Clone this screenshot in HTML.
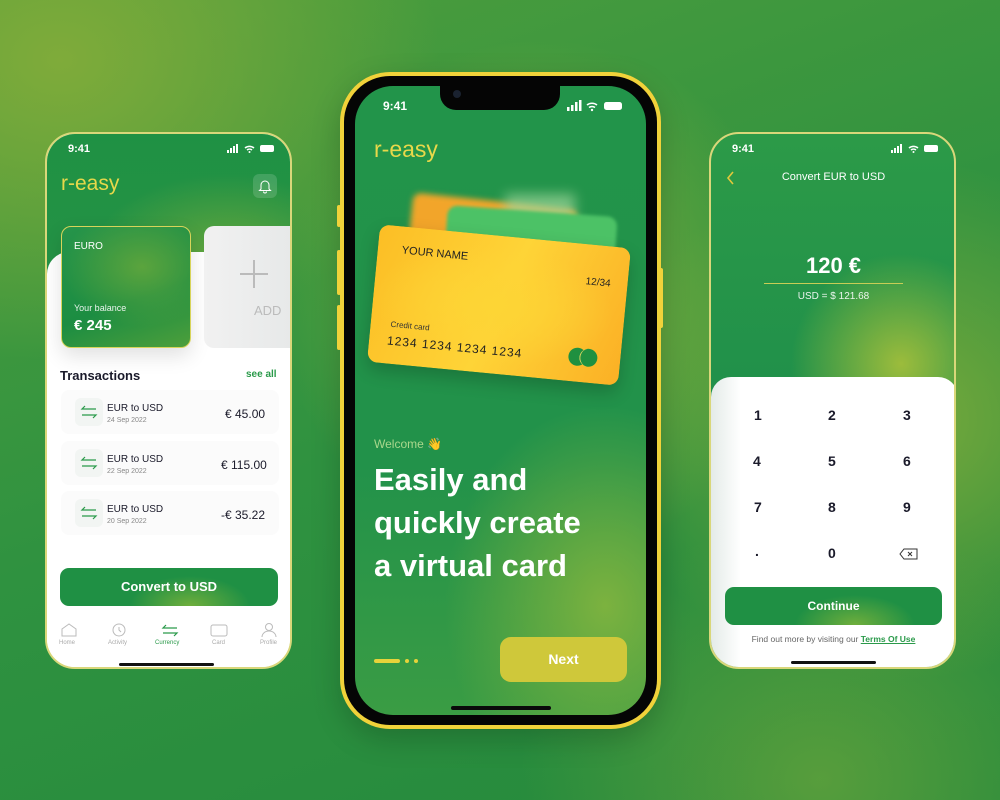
<!DOCTYPE html>
<html><head><meta charset="utf-8"><style>
*{margin:0;padding:0;box-sizing:border-box}
body{width:1000px;height:800px;overflow:hidden;font-family:"Liberation Sans",sans-serif;position:relative;
background:
radial-gradient(ellipse 260px 260px at 540px 300px,rgba(140,178,60,.85),rgba(140,178,60,0)),
radial-gradient(ellipse 300px 260px at 900px 420px,rgba(140,176,58,.8),rgba(140,176,58,0)),
radial-gradient(ellipse 380px 300px at 60px 60px,rgba(130,172,58,.95),rgba(130,172,58,0)),
radial-gradient(ellipse 300px 260px at 820px 780px,rgba(120,170,60,.6),rgba(120,170,60,0)),
linear-gradient(160deg,#4f9e3c 0%,#2f9240 50%,#24893c 100%);}
.abs{position:absolute}
.ph{position:absolute;border-radius:30px;overflow:hidden;border:2px solid #d9d77a}
.st{position:absolute;font-size:11px;font-weight:bold;color:#fff}
.w{color:#fff}
</style></head><body>

<!-- LEFT PHONE -->
<div class="ph" style="left:45px;top:132px;width:247px;height:537px;background:#fff">
  <div class="abs" style="left:0;top:0;width:247px;height:260px;background:radial-gradient(ellipse 140px 90px at 180px 130px,#6aa83c,rgba(0,0,0,0)),linear-gradient(180deg,#1f9144,#2a9446)"></div>
  <div class="abs" style="left:0;top:118px;width:247px;height:420px;background:#fff;border-radius:22px 0 0 0"></div>
  <div class="st" style="left:21px;top:9px">9:41</div>
  <svg class="abs" style="left:180px;top:10px" width="50" height="10"><rect x="0" y="6" width="2" height="3" fill="#fff"/><rect x="3" y="4" width="2" height="5" fill="#fff"/><rect x="6" y="2" width="2" height="7" fill="#fff"/><rect x="9" y="0" width="2" height="9" fill="#fff"/><path d="M18 4a7 7 0 0 1 9 0M20 6a4 4 0 0 1 5 0" stroke="#fff" stroke-width="1.5" fill="none"/><circle cx="22.5" cy="8" r="1" fill="#fff"/><rect x="33" y="1" width="14" height="7" rx="2" fill="#fff"/></svg>
  <div class="abs" style="left:14px;top:38px;font-size:21px;color:#e6d84a">r-easy</div>
  <div class="abs" style="left:206px;top:40px;width:24px;height:24px;border-radius:6px;background:rgba(255,255,255,.15)"></div>
  <svg class="abs" style="left:211px;top:44px" width="14" height="16"><path d="M3 11V7a4 4 0 0 1 8 0v4l1.5 1.5h-11z M5.5 13.5a1.5 1.5 0 0 0 3 0" stroke="#fff" stroke-width="1" fill="none"/></svg>
  <div class="abs" style="left:14px;top:92px;width:130px;height:122px;border-radius:10px;border:1.5px solid #d8d45a;background:radial-gradient(ellipse 80px 60px at 80px 40px,#5ba43d,rgba(0,0,0,0)),linear-gradient(160deg,#26944a,#1c8d42 60%,#4d9f3b);box-shadow:0 8px 20px rgba(0,0,0,.12)">
    <div class="abs w" style="left:12px;top:14px;font-size:10px">EURO</div>
    <div class="abs w" style="left:12px;top:76px;font-size:9px;opacity:.9">Your balance</div>
    <div class="abs w" style="left:12px;top:90px;font-size:15px;font-weight:bold">€ 245</div>
  </div>
  <div class="abs" style="left:157px;top:92px;width:95px;height:122px;border-radius:10px;background:linear-gradient(90deg,#f1f1f1,#e6e8e8)">
    <div class="abs" style="left:49px;top:34px;width:2px;height:28px;background:#bbb"></div>
    <div class="abs" style="left:36px;top:47px;width:28px;height:2px;background:#bbb"></div>
    <div class="abs" style="left:50px;top:77px;font-size:13px;color:#bbb">ADD</div>
  </div>
  <div class="abs" style="left:13px;top:234px;font-size:13px;font-weight:bold;color:#1a1a2a">Transactions</div>
  <div class="abs" style="left:199px;top:235px;font-size:10px;font-weight:bold;color:#2a9a4a">see all</div>
  <div class="abs" style="left:14px;top:256px;width:218px;height:44px;border-radius:8px;background:#fbfbfb"></div>
  <div class="abs" style="left:14px;top:307px;width:218px;height:44px;border-radius:8px;background:#fbfbfb"></div>
  <div class="abs" style="left:14px;top:357px;width:218px;height:44px;border-radius:8px;background:#fbfbfb"></div>
  <div class="abs" style="left:28px;top:264px;width:28px;height:28px;border-radius:6px;background:#f2f5f3"></div>
  <div class="abs" style="left:28px;top:315px;width:28px;height:28px;border-radius:6px;background:#f2f5f3"></div>
  <div class="abs" style="left:28px;top:365px;width:28px;height:28px;border-radius:6px;background:#f2f5f3"></div>
  <svg class="abs" style="left:33px;top:271px" width="18" height="14"><path d="M16 4H2l3-3M2 10h14l-3 3" stroke="#2a9a4a" stroke-width="1.2" fill="none"/></svg>
  <svg class="abs" style="left:33px;top:322px" width="18" height="14"><path d="M16 4H2l3-3M2 10h14l-3 3" stroke="#2a9a4a" stroke-width="1.2" fill="none"/></svg>
  <svg class="abs" style="left:33px;top:372px" width="18" height="14"><path d="M16 4H2l3-3M2 10h14l-3 3" stroke="#2a9a4a" stroke-width="1.2" fill="none"/></svg>
  <div class="abs" style="left:60px;top:269px;font-size:10px;color:#1a1a2a">EUR to USD</div>
  <div class="abs" style="left:60px;top:283px;font-size:7px;color:#888">24 Sep 2022</div>
  <div class="abs" style="left:178px;top:273px;font-size:12px;color:#1a1a2a">€ 45.00</div>
  <div class="abs" style="left:60px;top:320px;font-size:10px;color:#1a1a2a">EUR to USD</div>
  <div class="abs" style="left:60px;top:334px;font-size:7px;color:#888">22 Sep 2022</div>
  <div class="abs" style="left:174px;top:324px;font-size:12px;color:#1a1a2a">€ 115.00</div>
  <div class="abs" style="left:60px;top:370px;font-size:10px;color:#1a1a2a">EUR to USD</div>
  <div class="abs" style="left:60px;top:384px;font-size:7px;color:#888">20 Sep 2022</div>
  <div class="abs" style="left:174px;top:374px;font-size:12px;color:#1a1a2a">-€ 35.22</div>
  <div class="abs" style="left:13px;top:434px;width:218px;height:38px;border-radius:9px;background:radial-gradient(ellipse 60px 30px at 130px 38px,#6fae3c,rgba(0,0,0,0)),#1f9044;color:#fff;font-size:13px;font-weight:bold;text-align:center;line-height:38px">Convert to USD</div>
  <div class="abs" style="left:0;top:486px;width:247px;font-size:6px;color:#aaa">
    <span class="abs" style="left:12px;top:20px">Home</span>
    <span class="abs" style="left:61px;top:20px">Activity</span>
    <span class="abs" style="left:108px;top:20px;color:#2a9a4a">Currency</span>
    <span class="abs" style="left:165px;top:20px">Card</span>
    <span class="abs" style="left:213px;top:20px">Profile</span>
  </div>
  <svg class="abs" style="left:0;top:486px" width="247" height="20"><path d="M15 16V9l7-5 7 5v7z" stroke="#bbb" fill="none"/><circle cx="72" cy="10" r="6" stroke="#bbb" fill="none"/><path d="M72 7v3l2 2" stroke="#bbb" fill="none"/><path d="M130 8h-14l3-3M116 13h14l-3 3" stroke="#2a9a4a" stroke-width="1.2" fill="none"/><rect x="164" y="5" width="16" height="11" rx="2" stroke="#bbb" fill="none"/><circle cx="222" cy="7" r="3.5" stroke="#bbb" fill="none"/><path d="M215 17a7 6 0 0 1 14 0" stroke="#bbb" fill="none"/></svg>
  <div class="abs" style="left:72px;top:529px;width:95px;height:3px;border-radius:2px;background:#111"></div>
</div>

<!-- MIDDLE PHONE -->
<div class="abs" style="left:340px;top:72px;width:321px;height:657px;border-radius:50px;background:#f1d23a;box-shadow:0 10px 30px rgba(0,0,0,.2)"></div>
<div class="abs" style="left:337px;top:205px;width:4px;height:22px;background:#f1d23a;border-radius:2px"></div>
<div class="abs" style="left:337px;top:250px;width:4px;height:45px;background:#f1d23a;border-radius:2px"></div>
<div class="abs" style="left:337px;top:305px;width:4px;height:45px;background:#f1d23a;border-radius:2px"></div>
<div class="abs" style="left:659px;top:268px;width:4px;height:60px;background:#f1d23a;border-radius:2px"></div>
<div class="abs" style="left:344px;top:76px;width:313px;height:649px;border-radius:46px;background:#050505"></div>
<div class="abs" style="left:355px;top:86px;width:291px;height:629px;border-radius:38px;overflow:hidden;background:radial-gradient(ellipse 160px 200px at 250px 520px,#7cb23f,rgba(0,0,0,0)),linear-gradient(180deg,#22944a 0%,#22924a 60%,#3a9c44 100%)">
  <div class="st" style="left:28px;top:13px;font-size:12px">9:41</div>
  <svg class="abs" style="left:212px;top:14px" width="60" height="12"><rect x="0" y="7" width="2.5" height="4" fill="#fff"/><rect x="4" y="5" width="2.5" height="6" fill="#fff"/><rect x="8" y="2" width="2.5" height="9" fill="#fff"/><rect x="12" y="0" width="2.5" height="11" fill="#fff"/><path d="M20 5a8 8 0 0 1 10 0M22 7.5a5 5 0 0 1 6 0" stroke="#fff" stroke-width="1.6" fill="none"/><circle cx="25" cy="10" r="1.2" fill="#fff"/><rect x="37" y="2" width="18" height="8" rx="2.5" fill="#fff"/></svg>
  <div class="abs" style="left:85px;top:0;width:120px;height:24px;background:#050505;border-radius:0 0 16px 16px"></div>
  <div class="abs" style="left:98px;top:4px;width:8px;height:8px;border-radius:50%;background:#1a2230"></div>
  <div class="abs" style="left:19px;top:50px;font-size:23px;color:#e8d84a">r-easy</div>
  <div class="abs" style="left:55px;top:115px;width:165px;height:60px;background:#f2a52a;border-radius:8px;transform:rotate(6deg);filter:blur(3px)"></div>
  <div class="abs" style="left:150px;top:108px;width:70px;height:30px;background:#9fd69a;filter:blur(6px);opacity:.7"></div>
  <div class="abs" style="left:90px;top:125px;width:170px;height:80px;background:#4cc266;border-radius:10px;transform:rotate(4deg);filter:blur(1.5px)"></div>
  <div class="abs" style="left:18px;top:150px;width:252px;height:138px;border-radius:10px;transform:rotate(5.5deg);background:radial-gradient(ellipse 120px 60px at 120px 70px,#fdd535,rgba(0,0,0,0)),linear-gradient(110deg,#fcbe25,#fed437 50%,#fbb025);box-shadow:0 8px 18px rgba(0,0,0,.2)">
    <div class="abs" style="left:24px;top:18px;font-size:11px;color:#222">YOUR NAME</div>
    <div class="abs" style="left:210px;top:32px;font-size:10px;color:#222">12/34</div>
    <div class="abs" style="left:20px;top:94px;font-size:8px;color:#333">Credit card</div>
    <div class="abs" style="left:18px;top:108px;font-size:12px;color:#222;letter-spacing:1px">1234 1234 1234 1234</div>
    <div class="abs" style="left:200px;top:104px;width:18px;height:18px;border-radius:50%;background:#1f9040"></div>
    <div class="abs" style="left:211px;top:104px;width:18px;height:18px;border-radius:50%;background:#1f9040;border-left:1px solid #e2d860"></div>
  </div>
  <div class="abs" style="left:19px;top:351px;font-size:12px;color:#a9d78c">Welcome <span style="color:#e2c93a">👋</span></div>
  <div class="abs" style="left:19px;top:372px;font-size:31px;font-weight:bold;color:#fff;line-height:43px">Easily and<br>quickly create<br>a virtual card</div>
  <div class="abs" style="left:19px;top:573px;width:26px;height:4px;border-radius:2px;background:#e6d33a"></div>
  <div class="abs" style="left:50px;top:573px;width:4px;height:4px;border-radius:2px;background:#e6d33a"></div>
  <div class="abs" style="left:59px;top:573px;width:4px;height:4px;border-radius:2px;background:#e6d33a"></div>
  <div class="abs" style="left:145px;top:551px;width:127px;height:45px;border-radius:11px;background:#cfc83a;color:#fff;font-size:14px;font-weight:bold;text-align:center;line-height:45px">Next</div>
  <div class="abs" style="left:96px;top:620px;width:100px;height:4px;border-radius:2px;background:#0a0a0a"></div>
</div>

<!-- RIGHT PHONE -->
<div class="ph" style="left:709px;top:132px;width:247px;height:537px;background:radial-gradient(ellipse 110px 110px at 190px 230px,#9cbc3c,rgba(0,0,0,0)),linear-gradient(180deg,#2c9a48,#20904a 50%,#3b9c40)">
  <div class="st" style="left:21px;top:9px">9:41</div>
  <svg class="abs" style="left:180px;top:10px" width="50" height="10"><rect x="0" y="6" width="2" height="3" fill="#fff"/><rect x="3" y="4" width="2" height="5" fill="#fff"/><rect x="6" y="2" width="2" height="7" fill="#fff"/><rect x="9" y="0" width="2" height="9" fill="#fff"/><path d="M18 4a7 7 0 0 1 9 0M20 6a4 4 0 0 1 5 0" stroke="#fff" stroke-width="1.5" fill="none"/><circle cx="22.5" cy="8" r="1" fill="#fff"/><rect x="33" y="1" width="14" height="7" rx="2" fill="#fff"/></svg>
  <svg class="abs" style="left:14px;top:36px" width="12" height="16"><path d="M8 2L3 8l5 6" stroke="#e2c83a" stroke-width="1.6" fill="none"/></svg>
  <div class="abs w" style="left:0;top:37px;width:245px;text-align:center;font-size:11px">Convert EUR to USD</div>
  <div class="abs w" style="left:0;top:119px;width:245px;text-align:center;font-size:22px;font-weight:bold">120 €</div>
  <div class="abs" style="left:53px;top:149px;width:139px;height:1px;background:#c8cd55"></div>
  <div class="abs w" style="left:0;top:157px;width:245px;text-align:center;font-size:10px;opacity:.9">USD = $ 121.68</div>
  <div class="abs" style="left:0;top:243px;width:247px;height:300px;border-radius:20px 20px 0 0;background:linear-gradient(90deg,#e4ebe8 0%,#fff 12%,#fff)">
    <div class="abs" style="left:0;top:30px;width:245px;font-size:14px;font-weight:bold;color:#1a1a2a">
      <span class="abs" style="left:43px;top:0">1</span><span class="abs" style="left:117px;top:0">2</span><span class="abs" style="left:192px;top:0">3</span>
      <span class="abs" style="left:42px;top:46px">4</span><span class="abs" style="left:117px;top:46px">5</span><span class="abs" style="left:192px;top:46px">6</span>
      <span class="abs" style="left:43px;top:92px">7</span><span class="abs" style="left:117px;top:92px">8</span><span class="abs" style="left:192px;top:92px">9</span>
      <span class="abs" style="left:44px;top:136px">.</span><span class="abs" style="left:117px;top:138px">0</span>
    </div>
    <svg class="abs" style="left:188px;top:171px" width="20" height="12"><path d="M5 1h13v10H5L1 6z" stroke="#333" fill="none"/><path d="M9 4l4 4M13 4l-4 4" stroke="#333"/></svg>
    <div class="abs" style="left:14px;top:210px;width:217px;height:38px;border-radius:9px;background:radial-gradient(ellipse 60px 30px at 130px 38px,#6fae3c,rgba(0,0,0,0)),#1f9044;color:#fff;font-size:12px;font-weight:bold;text-align:center;line-height:38px">Continue</div>
    <div class="abs" style="left:0;top:257px;width:245px;text-align:center;font-size:8.5px;color:#666">Find out more by visiting our <b style="color:#2a9a4a;text-decoration:underline">Terms Of Use</b></div>
    <div class="abs" style="left:80px;top:284px;width:85px;height:3px;border-radius:2px;background:#111"></div>
  </div>
</div>
</body></html>
